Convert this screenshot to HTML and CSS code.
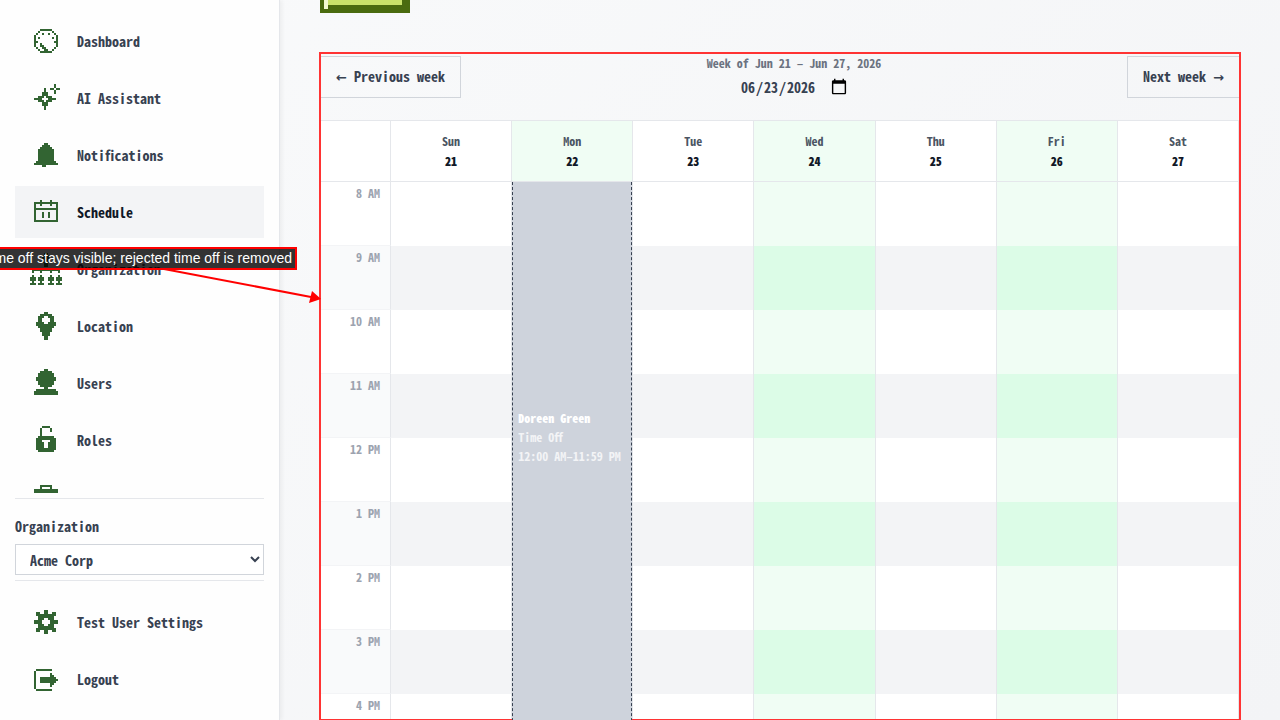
FILE: index.html
```html
<!DOCTYPE html>
<html lang="en">
<head>
  <meta charset="UTF-8" />
  <title>Schedule</title>
  <link rel="stylesheet" href="styles.css">
</head>
<body>
  <div class="layout">
    <aside class="sidebar">
      <nav class="nav-main">
        <a class="nav-item" href="#dashboard">
          <svg class="icon" viewBox="0 0 16 16"><path d="M5 2h6v1h-6zM4 3h1v1h-1zM11 3h1v1h-1zM3 4h1v1h-1zM12 4h1v1h-1zM6 4h1v1h-1zM9 4h1v1h-1zM2 5h1v6h-1zM13 5h1v6h-1zM4 6h1v1h-1zM11 6h1v1h-1zM3 8h1v1h-1zM12 8h1v1h-1zM5 9h1v2h-1zM6 10h1v2h-1zM7 11h1v2h-1zM8 12h1v1h-1zM3 11h1v1h-1zM12 11h1v1h-1zM4 12h1v1h-1zM11 12h1v1h-1zM5 13h6v1h-6z"/></svg>
          <span>Dashboard</span>
        </a>
        <a class="nav-item" href="#assistant">
          <svg class="icon" viewBox="0 0 16 16"><path d="M7 3h1v2h-1zM6 5h3v2h-3zM4 7h3v1h-3zM8 7h3v1h-3zM2 8h4v1h-4zM9 8h4v1h-4zM4 9h3v1h-3zM8 9h3v1h-3zM6 10h3v2h-3zM7 12h1v2h-1zM12 1h1v2h-1zM10 3h2v1h-2zM13 3h2v1h-2zM12 4h1v2h-1z"/></svg>
          <span>AI Assistant</span>
        </a>
        <a class="nav-item" href="#notifications">
          <svg class="icon" viewBox="0 0 16 16"><path d="M7 2h2v1h-2zM6 3h4v1h-4zM5 4h6v1h-6zM4 5h8v6h-8zM3 11h10v1h-10zM2 12h12v1h-12zM6 13h2v1h-2z"/></svg>
          <span>Notifications</span>
        </a>
        <a class="nav-item active" href="#schedule">
          <svg class="icon" viewBox="0 0 16 16"><path d="M5 2h1v3h-1zM10 2h1v3h-1zM2 3h12v1h-12zM2 4h1v9h-1zM13 4h1v9h-1zM2 6h12v1h-12zM6 8h1v3h-1zM9 8h1v3h-1zM2 12h12v1h-12z"/></svg>
          <span>Schedule</span>
        </a>
        <a class="nav-item" href="#organization">
          <svg class="icon" viewBox="0 0 16 16"><path d="M7 0h2v1h-2zM6 1h4v2h-4zM7 3h2v1h-2zM6 4h4v1h-4zM7 5h2v2h-2zM1 8h14v1h-14zM1 9h1v1h-1zM5 9h1v1h-1zM10 9h1v1h-1zM14 9h1v1h-1zM1 11h1v5h-1zM0 12h3v2h-3zM0 15h3v1h-3zM5 11h1v5h-1zM4 12h3v2h-3zM4 15h3v1h-3zM10 11h1v5h-1zM9 12h3v2h-3zM9 15h3v1h-3zM14 11h1v5h-1zM13 12h3v2h-3zM13 15h3v1h-3z"/></svg>
          <span>Organization</span>
        </a>
        <a class="nav-item" href="#location">
          <svg class="icon" viewBox="0 0 16 16"><path d="M7 1h2v1h-2zM5 2h6v1h-6zM4 3h3v1h-3zM9 3h3v1h-3zM4 4h2v2h-2zM10 4h2v2h-2zM3 6h4v1h-4zM9 6h4v1h-4zM3 7h10v1h-10zM4 8h8v1h-8zM5 9h6v2h-6zM6 11h4v2h-4zM7 13h2v2h-2z"/></svg>
          <span>Location</span>
        </a>
        <a class="nav-item" href="#users">
          <svg class="icon" viewBox="0 0 16 16"><path d="M7 1h2v1h-2zM5 2h6v1h-6zM4 3h8v2h-8zM3 5h10v2h-10zM4 7h8v2h-8zM5 9h6v1h-6zM7 10h2v1h-2zM3 11h10v1h-10zM2 12h12v2h-12z"/></svg>
          <span>Users</span>
        </a>
        <a class="nav-item" href="#roles">
          <svg class="icon" viewBox="0 0 16 16"><path d="M6 1h4v1h-4zM5 2h1v4h-1zM10 2h1v2h-1zM4 6h8v1h-8zM3 7h10v1h-10zM3 8h3v1h-3zM10 8h3v1h-3zM3 9h4v3h-4zM9 9h4v3h-4zM3 12h10v1h-10zM4 13h8v1h-8z"/></svg>
          <span>Roles</span>
        </a>
        <a class="nav-item" href="#jobs" aria-label="Jobs">
          <svg class="icon" viewBox="0 0 16 16"><path d="M5 2h6v1h-6zM5 3h1v1h-1zM10 3h1v1h-1zM2 4h12v9h-12z"/></svg>
        </a>
      </nav>

      <div class="org-picker">
        <label for="orgSelect">Organization</label>
        <select id="orgSelect">
          <option>Acme Corp</option>
        </select>
      </div>

      <nav class="nav-user">
        <a class="nav-item" href="#settings">
          <svg class="icon" viewBox="0 0 16 16"><path d="M7 2h2v2h-2zM3 3h2v1h-2zM11 3h2v1h-2zM3 4h10v1h-10zM4 5h8v1h-8zM4 6h3v1h-3zM9 6h3v1h-3zM2 7h4v2h-4zM10 7h4v2h-4zM4 9h3v1h-3zM9 9h3v1h-3zM4 10h8v1h-8zM3 11h10v1h-10zM3 12h2v1h-2zM11 12h2v1h-2zM7 12h2v2h-2z"/></svg>
          <span>Test User Settings</span>
        </a>
        <a class="nav-item" href="#logout">
          <svg class="icon" viewBox="0 0 16 16"><path d="M3 3h8v1h-8zM2 4h1v9h-1zM3 13h8v1h-8zM5 7h5v3h-5zM10 5h1v7h-1zM11 6h1v5h-1zM12 7h1v3h-1zM13 8h1v1h-1z"/></svg>
          <span>Logout</span>
        </a>
      </nav>
    </aside>

    <main class="content">
      <button type="button" class="pixel-button" aria-label="Create"></button>

      <section class="schedule">
        <header class="week-bar">
          <button type="button" class="week-button"><span class="arrow">←</span> Previous week</button>
          <div class="week-picker">
            <label for="weekDate">Week of Jun 21 – Jun 27, 2026</label>
            <input type="date" id="weekDate" value="2026-06-23">
          </div>
          <button type="button" class="week-button">Next week <span class="arrow">→</span></button>
        </header>

        <table class="calendar">
          <thead>
            <tr>
              <th class="time"></th>
              <th>Sun<strong>21</strong></th>
              <th class="open">Mon<strong>22</strong></th>
              <th>Tue<strong>23</strong></th>
              <th class="open">Wed<strong>24</strong></th>
              <th>Thu<strong>25</strong></th>
              <th class="open">Fri<strong>26</strong></th>
              <th>Sat<strong>27</strong></th>
            </tr>
          </thead>
          <tbody>
            <tr>
              <th class="time">8 AM</th>
              <td></td>
              <td class="open event-day">
                <div class="event">
                  <strong>Doreen Green</strong>
                  <span>Time Off</span>
                  <span>12:00 AM–11:59 PM</span>
                </div>
              </td>
              <td></td><td class="open"></td><td></td><td class="open"></td><td></td>
            </tr>
            <tr><th class="time">9 AM</th><td></td><td class="open"></td><td></td><td class="open"></td><td></td><td class="open"></td><td></td></tr>
            <tr><th class="time">10 AM</th><td></td><td class="open"></td><td></td><td class="open"></td><td></td><td class="open"></td><td></td></tr>
            <tr><th class="time">11 AM</th><td></td><td class="open"></td><td></td><td class="open"></td><td></td><td class="open"></td><td></td></tr>
            <tr><th class="time">12 PM</th><td></td><td class="open"></td><td></td><td class="open"></td><td></td><td class="open"></td><td></td></tr>
            <tr><th class="time">1 PM</th><td></td><td class="open"></td><td></td><td class="open"></td><td></td><td class="open"></td><td></td></tr>
            <tr><th class="time">2 PM</th><td></td><td class="open"></td><td></td><td class="open"></td><td></td><td class="open"></td><td></td></tr>
            <tr><th class="time">3 PM</th><td></td><td class="open"></td><td></td><td class="open"></td><td></td><td class="open"></td><td></td></tr>
            <tr><th class="time">4 PM</th><td></td><td class="open"></td><td></td><td class="open"></td><td></td><td class="open"></td><td></td></tr>
          </tbody>
        </table>
      </section>
    </main>

    <div class="highlight"></div>
    <svg class="pointer" viewBox="0 0 160 40">
      <path d="M3 9L150 37" stroke="#ff0000" stroke-width="2" fill="none"/>
      <path d="M160 39L151 31L148 43z" fill="#ff0000"/>
    </svg>
    <div class="callout">time off stays visible; rejected time off is removed</div>
  </div>
</body>
</html>
```
FILE: styles.css
```css
* {
  box-sizing: border-box;
}

body {
  margin: 0;
  color: #374151;
  font-family: "Noto Sans CJK JP", "Liberation Mono", monospace;
  font-feature-settings: "hwid";
  font-size: 14px;
  font-weight: 700;
  line-height: 20px;
}

button,
input,
select {
  color: inherit;
  font: inherit;
  font-feature-settings: inherit;
}

.layout {
  position: relative;
  display: flex;
  height: 100vh;
  overflow: hidden;
  background: linear-gradient(135deg, #f9fafb, #f3f4f6);
}

/* Sidebar */
.sidebar {
  display: flex;
  flex: 0 0 280px;
  flex-direction: column;
  padding: 15px;
  background-color: #fefefe;
  border-right: 1px solid #e5e7eb;
  box-shadow: 2px 0 4px rgba(0, 0, 0, 0.05);
}

.nav-main,
.nav-user {
  display: flex;
  flex-direction: column;
  gap: 5px;
}

.nav-main {
  flex: 1;
  min-height: 0;
  margin-bottom: 5px;
  overflow: hidden;
}

.nav-item {
  display: flex;
  flex: 0 0 52px;
  align-items: center;
  gap: 15px;
  padding: 0 15px;
  color: #374151;
  text-decoration: none;
}

.nav-item.active {
  background-color: #f3f4f6;
  color: #111827;
}

.icon {
  flex: none;
  width: 32px;
  height: 32px;
  fill: #326432;
  shape-rendering: crispEdges;
}

.org-picker {
  display: flex;
  flex-direction: column;
  gap: 8px;
  padding: 17px 0 5px;
  border-top: 1px solid #e5e7eb;
  border-bottom: 1px solid #e5e7eb;
}

.org-picker select {
  width: 100%;
  height: 31px;
  padding: 0 10px;
  background-color: #fff;
  border: 1px solid #d1d5db;
  border-radius: 0;
}

.nav-user {
  padding-top: 15px;
}

/* Schedule */
.content {
  flex: 1;
  min-width: 0;
  padding: 0 40px;
}

.pixel-button {
  display: block;
  width: 90px;
  height: 48px;
  margin: -35px 0 40px;
  background-color: #c9e26a;
  border: solid #4a6b0f;
  border-width: 4px 8px 4px 4px;
  box-shadow: inset 4px 0 #f3fbd0, inset 0 -4px #4a6b0f;
}

.week-bar {
  display: flex;
  align-items: center;
  justify-content: space-between;
  margin-bottom: 19px;
}

.week-button {
  height: 42px;
  padding: 0 15px;
  background: transparent;
  border: 1px solid #d1d5db;
  cursor: pointer;
}

.arrow {
  font-family: "DejaVu Sans", sans-serif;
  font-size: 13px;
}

.week-picker {
  display: flex;
  flex-direction: column;
  align-items: center;
  gap: 2px;
  padding-bottom: 2px;
}

.week-picker label {
  color: #6b7280;
  font-size: 12px;
}

.week-picker input {
  height: 24px;
  padding: 0;
  background: transparent;
  border: 0;
}

.week-picker input::-webkit-calendar-picker-indicator {
  width: 18px;
  height: 18px;
  padding: 0;
}

.calendar {
  width: 100%;
  table-layout: fixed;
  border: 1px solid #e5e7eb;
  border-spacing: 0;
  font-size: 12px;
  background-color: #fff;
}

.calendar th,
.calendar td {
  padding: 0;
  border-right: 1px solid #e5e7eb;
}

.calendar thead th {
  height: 61px;
  padding-bottom: 1px;
  border-bottom: 1px solid #e5e7eb;
  color: #4b5563;
}

.calendar thead strong {
  display: block;
  color: #111827;
}

.calendar .time {
  width: 70px;
}

.calendar tbody .time {
  height: 64px;
  padding: 1px 10px;
  border-bottom: 1px solid #f3f4f6;
  color: #9ca3af;
  text-align: right;
  vertical-align: top;
}

.calendar tbody tr:nth-child(even) td {
  background-color: #f3f4f6;
}

.calendar tbody tr:nth-child(even) .time {
  background-color: #f9fafb;
}

.calendar .open {
  background-color: #f0fdf4;
}

.calendar tbody tr:nth-child(even) .open {
  background-color: #dcfce7;
}

.event-day {
  position: relative;
}

.event {
  position: absolute;
  top: 0;
  left: 0;
  z-index: 1;
  display: flex;
  flex-direction: column;
  width: 100%;
  height: 960px;
  padding: 226px 5px;
  background-color: #ced3dc;
  border: dashed #374151;
  border-width: 0 1px;
  color: #f3f4f6;
  line-height: 19px;
  white-space: nowrap;
}

.event strong {
  color: #fff;
}

/* Annotation drawn over the page */
.highlight {
  position: absolute;
  top: 52px;
  right: 39px;
  bottom: -1px;
  left: 319px;
  border: 2px solid #ff3333;
}

.pointer {
  position: absolute;
  top: 260px;
  left: 161px;
  width: 160px;
  height: 40px;
  overflow: visible;
}

.callout {
  position: absolute;
  top: 247px;
  right: calc(100% - 297px);
  padding: 1px 3px;
  background-color: rgba(0, 0, 0, 0.8);
  border: 2px solid #ff0000;
  color: #fff;
  font-family: "Liberation Sans", sans-serif;
  font-feature-settings: normal;
  font-size: 14px;
  font-weight: 400;
  line-height: 17px;
  white-space: nowrap;
}
```
